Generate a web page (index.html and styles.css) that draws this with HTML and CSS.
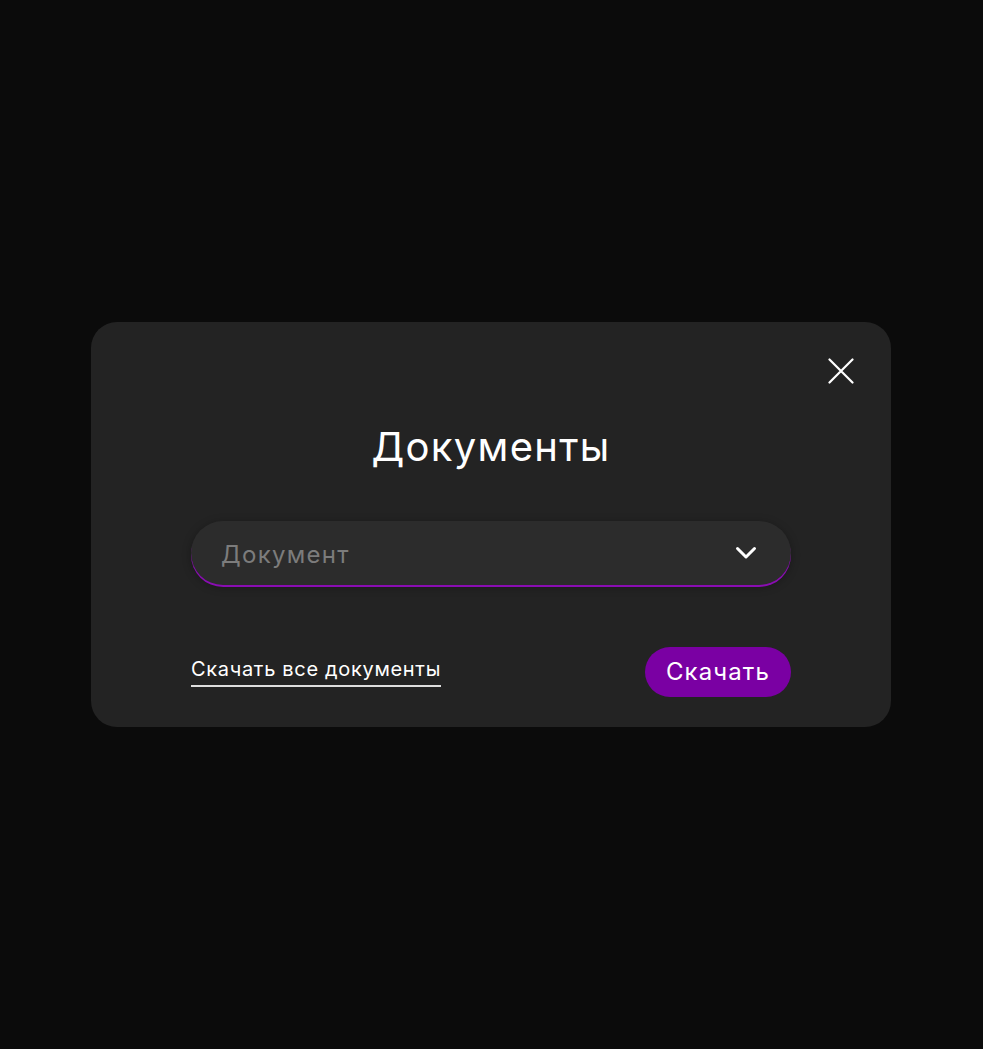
FILE: index.html
```html
<!DOCTYPE html>
<html lang="ru">
<head>
<meta charset="utf-8">
<title>Документы</title>
<link rel="stylesheet" href="styles.css">
</head>
<body>
<div class="overlay">
  <div class="modal">
    <button class="close" aria-label="Закрыть">
      <svg width="26" height="26" viewBox="0 0 26 26"><path d="M1.5 1.5L24.5 24.5M24.5 1.5L1.5 24.5" stroke="#fff" stroke-width="2.2" stroke-linecap="round" fill="none"/></svg>
    </button>
    <h1 class="title">Документы</h1>
    <div class="select">
      <span class="placeholder">Документ</span>
      <svg class="chevron" width="22" height="14" viewBox="0 0 22 14"><path d="M2.5 2.5L11 11L19.5 2.5" stroke="#fff" stroke-width="3" stroke-linecap="round" stroke-linejoin="round" fill="none"/></svg>
    </div>
    <div class="actions">
      <a class="all-link" href="#">Скачать все документы</a>
      <button class="download">Скачать</button>
    </div>
  </div>
</div>
</body>
</html>
```
FILE: styles.css
```css
html, body {
  margin: 0;
  padding: 0;
  height: 100%;
}
body {
  background: #0b0b0b;
  font-family: "Inter", "Noto Sans", sans-serif;
  color: #fff;
}
.overlay {
  height: 100%;
  display: flex;
  align-items: center;
  justify-content: center;
}
.modal {
  position: relative;
  box-sizing: border-box;
  width: 800px;
  height: 405px;
  margin-right: 1px;
  background: #232323;
  border-radius: 26px;
  padding: 101px 100px 30px;
  display: flex;
  flex-direction: column;
}
.close {
  position: absolute;
  top: 36px;
  right: 37px;
  width: 26px;
  height: 26px;
  padding: 0;
  border: 0;
  background: none;
  display: block;
  cursor: pointer;
}
.close svg { display: block; }
.title {
  margin: 0;
  font-size: 40px;
  line-height: 48px;
  font-weight: 400;
  letter-spacing: 1.3px;
  text-align: center;
  color: #fff;
}
.select {
  margin-top: 50px;
  height: 64px;
  flex-shrink: 0;
  box-sizing: border-box;
  border-radius: 32px;
  background: #2c2c2c;
  box-shadow: 0 2px 0 #8a0db3, 0 2px 10px rgba(0, 0, 0, 0.3);
  padding: 0 34px 0 30px;
  display: flex;
  align-items: center;
  justify-content: space-between;
}
.placeholder {
  font-size: 24px;
  letter-spacing: 1.3px;
  color: #7c7c7c;
  padding-top: 2px;
}
.chevron { display: block; }
.actions {
  margin-top: auto;
  display: flex;
  align-items: center;
  justify-content: space-between;
}
.all-link {
  font-size: 20px;
  line-height: 24px;
  letter-spacing: 0.68px;
  color: #fff;
  text-decoration: none;
  padding-bottom: 4px;
  border-bottom: 2px solid #dedede;
}
.download {
  height: 50px;
  padding: 0 21px;
  border: 0;
  border-radius: 25px;
  background: #7a00a3;
  color: #fff;
  font-family: "Inter", "Noto Sans", sans-serif;
  font-size: 24px;
  letter-spacing: 1.1px;
  line-height: 50px;
  cursor: pointer;
}
```
